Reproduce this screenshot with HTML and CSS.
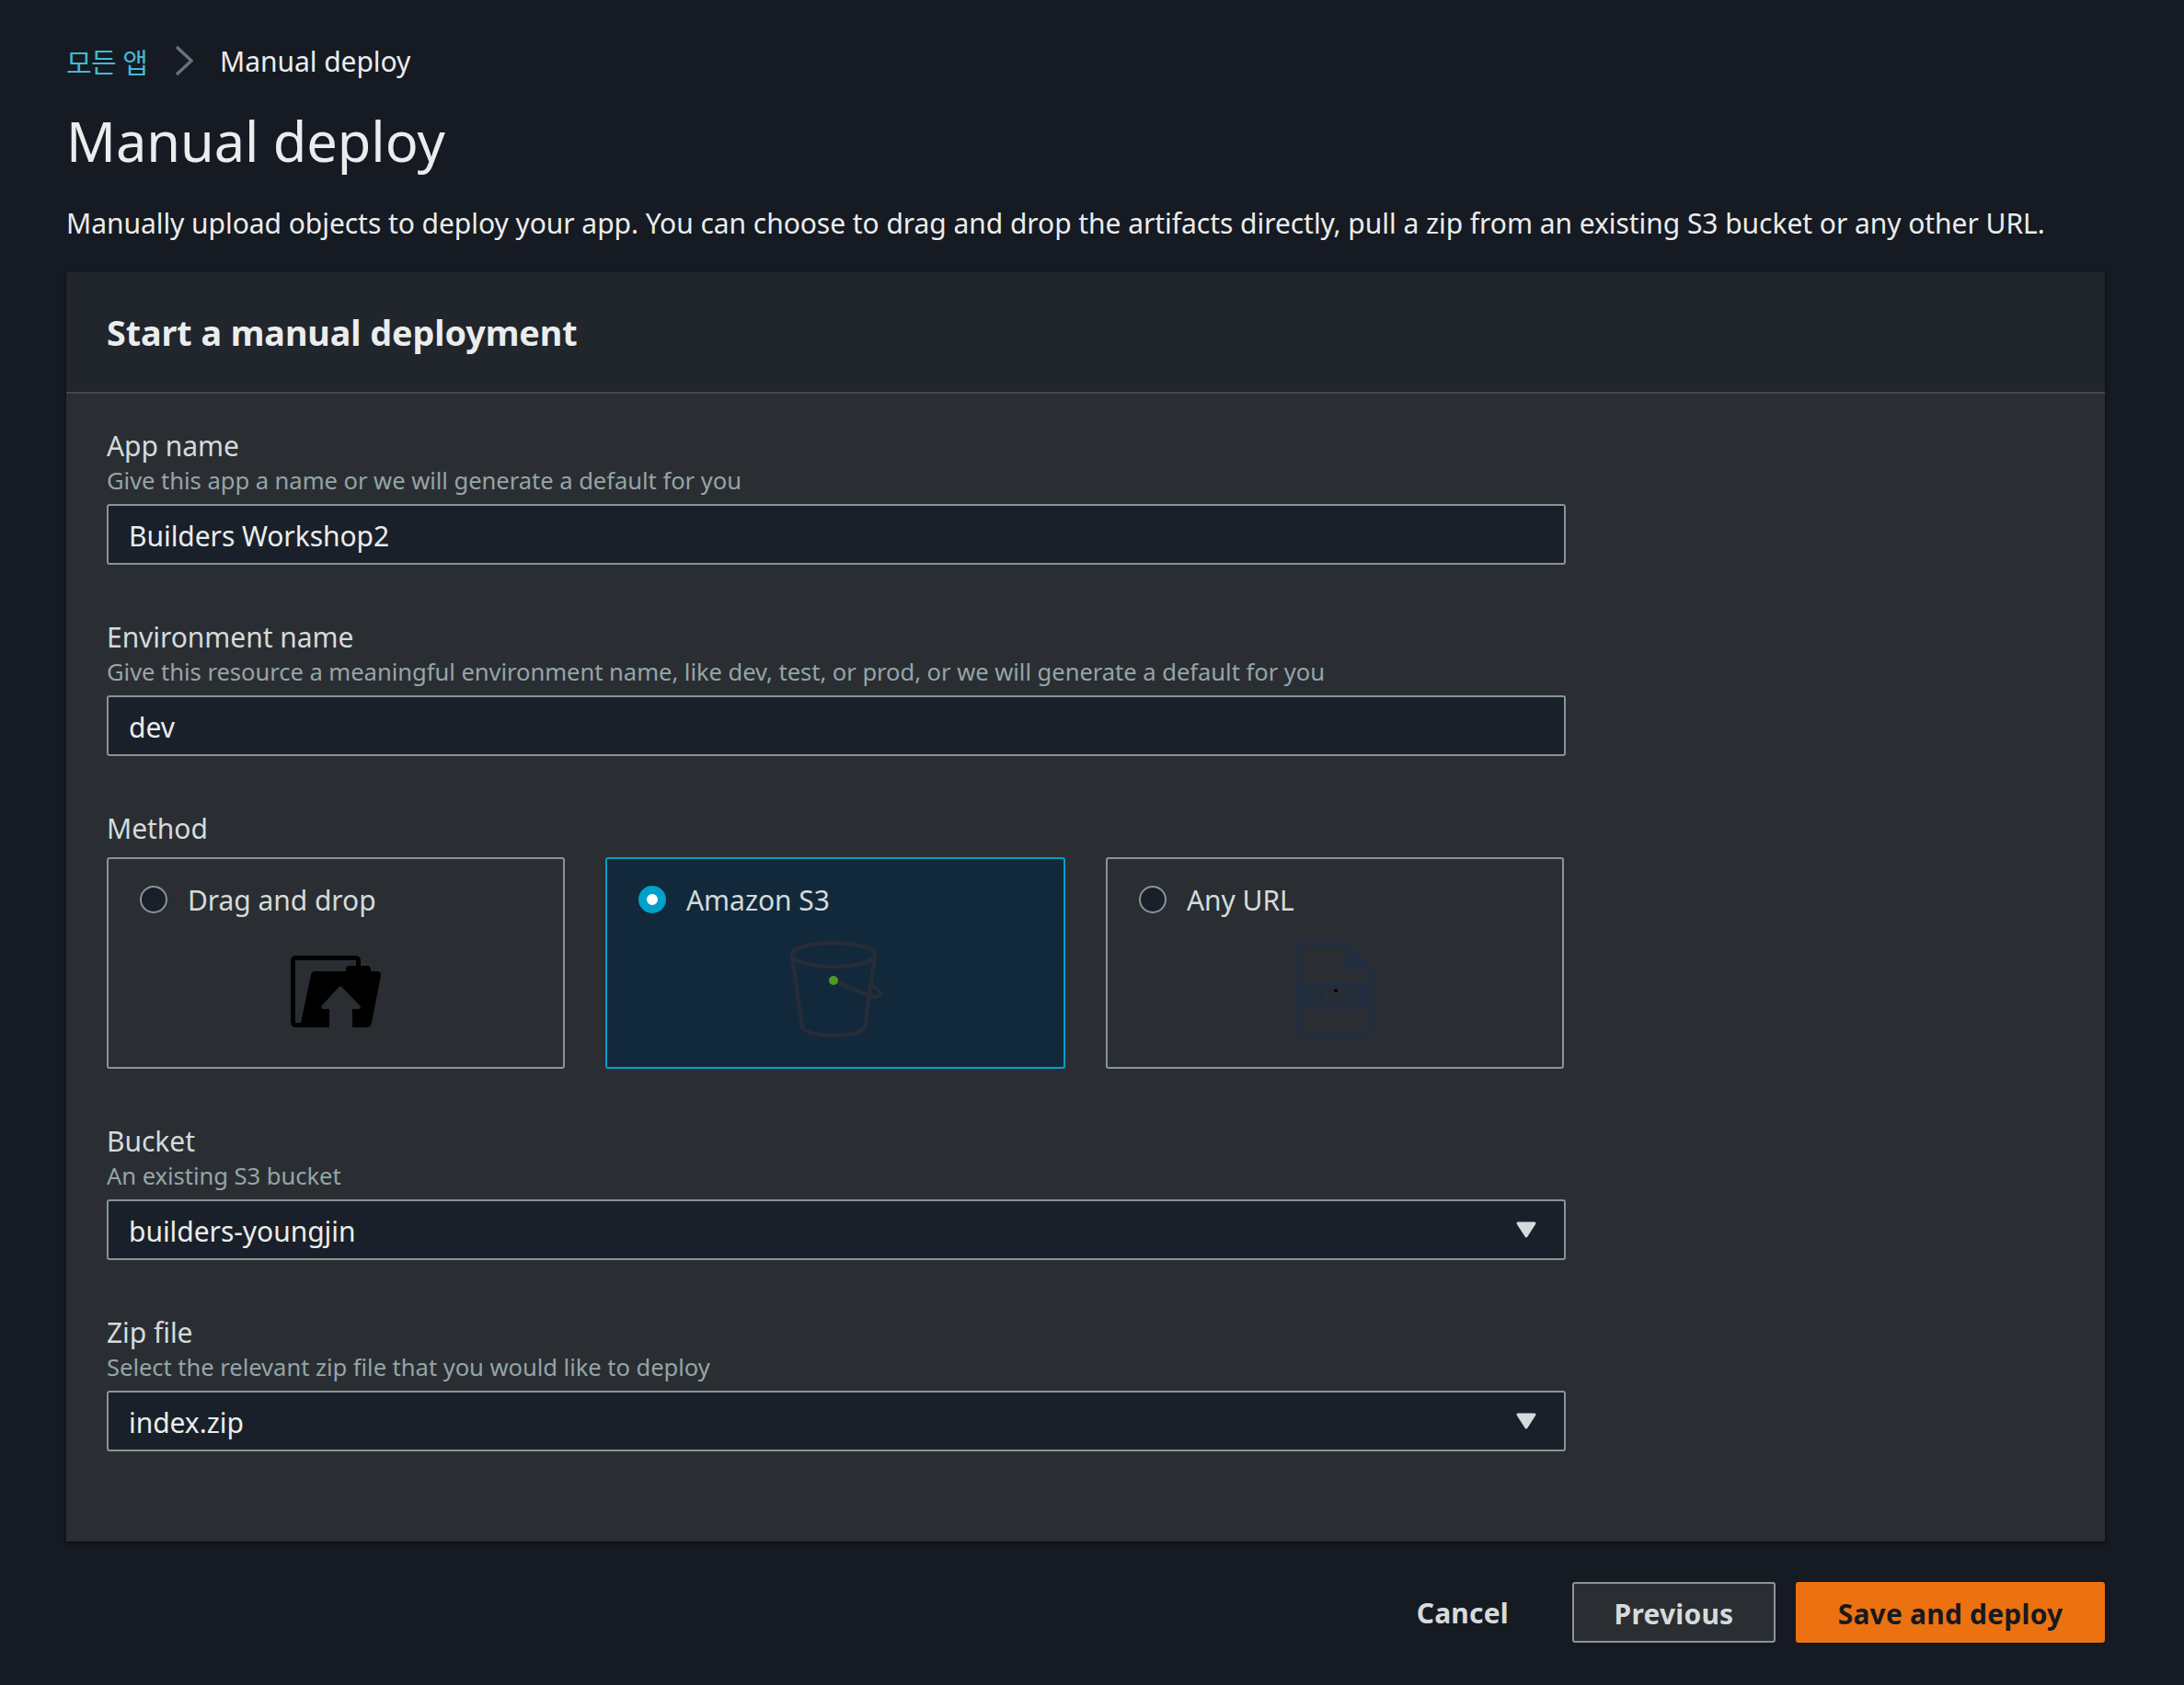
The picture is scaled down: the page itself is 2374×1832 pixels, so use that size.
FILE: index.html
```html
<!DOCTYPE html>
<html lang="en">
<head>
    <meta charset="UTF-8">
    <title>Manual deploy</title>
    <link rel="stylesheet" href="styles.css">
</head>
<body>
    <nav class="crumbs">
        <a class="crumb-link" href="#">모든 앱</a>
        <svg class="crumb-sep" width="20" height="34" viewBox="0 0 20 34"><path d="M2 2 L18 17 L2 32" fill="none" stroke="#687078" stroke-width="3.5"/></svg>
        <span class="crumb-now">Manual deploy</span>
    </nav>
    <h1 class="title">Manual deploy</h1>
    <p class="intro">Manually upload objects to deploy your app. You can choose to drag and drop the artifacts directly, pull a zip from an existing S3 bucket or any other URL.</p>

    <section class="panel">
        <h2 class="panel-head">Start a manual deployment</h2>
        <div class="panel-body">
            <div class="field">
                <div class="label">App name</div>
                <div class="hint">Give this app a name or we will generate a default for you</div>
                <div class="input">Builders Workshop2</div>
            </div>
            <div class="field">
                <div class="label">Environment name</div>
                <div class="hint">Give this resource a meaningful environment name, like dev, test, or prod, or we will generate a default for you</div>
                <div class="input">dev</div>
            </div>
            <div class="field">
                <div class="label label-method">Method</div>
                <div class="methods">
                    <div class="method">
                        <div class="method-top"><span class="radio"></span><span>Drag and drop</span></div>
                        <svg class="method-icon" width="120" height="110" viewBox="0 0 120 110">
                            <path d="M84.5 32 V24 a2.5 2.5 0 0 0 -2.5 -2.5 H16 a2.5 2.5 0 0 0 -2.5 2.5 V92 a2.5 2.5 0 0 0 2.5 2.5 H30" fill="none" stroke="#000" stroke-width="5"/>
                            <path d="M22 92 L33 40 a5 5 0 0 1 5 -4 H71 V34 a4 4 0 0 1 4 -4 H94 a4 4 0 0 1 4 4 V36 H105 a4 4 0 0 1 4 4.5 L99 92 a6 6 0 0 1 -5 5 H78 V77 H85 a2 2 0 0 0 1.5 -3.3 L66.5 53 a2 2 0 0 0 -3 0 L44.5 73.7 a2 2 0 0 0 1.5 3.3 H53 V97 H22 Z" fill="#000"/>
                        </svg>
                    </div>
                    <div class="method method-on">
                        <div class="method-top"><span class="radio radio-on"></span><span>Amazon S3</span></div>
                        <svg class="method-icon" width="120" height="110" viewBox="0 0 120 110">
                            <g fill="none" stroke="#272c38" stroke-width="4.5" stroke-linecap="round">
                                <ellipse cx="58" cy="18" rx="45" ry="13"/>
                                <path d="M13 20 L24 96 C26 109 90 109 92 96 L103 20"/>
                                <path d="M58 46 L95 62 C104 65 111 64 109 60 C107 56 102 53 99 51"/>
                            </g>
                            <circle cx="58" cy="46" r="5" fill="#4a9c1f"/>
                        </svg>
                    </div>
                    <div class="method">
                        <div class="method-top"><span class="radio"></span><span>Any URL</span></div>
                        <svg class="method-icon" width="120" height="110" viewBox="0 0 120 110">
                            <path d="M20 7 H72 L99 35 V104 H20 Z" fill="none" stroke="#222d3d" stroke-width="6" stroke-linejoin="round"/>
                            <path d="M72 6 L101 36 H72 Z" fill="#222d3d"/>
                            <rect x="18" y="47" width="84" height="31" fill="#222d3d"/>
                            <text class="url-text" x="60" y="72" text-anchor="middle">URL</text>
                            <circle cx="61" cy="57" r="2" fill="#000"/>
                        </svg>
                    </div>
                </div>
            </div>
            <div class="field">
                <div class="label">Bucket</div>
                <div class="hint">An existing S3 bucket</div>
                <div class="input select">builders-youngjin<svg class="caret" width="24" height="20" viewBox="0 0 24 20"><path d="M3 3 H21 L12 17 Z" fill="#d5dbdb" stroke="#d5dbdb" stroke-width="3" stroke-linejoin="round"/></svg></div>
            </div>
            <div class="field">
                <div class="label">Zip file</div>
                <div class="hint">Select the relevant zip file that you would like to deploy</div>
                <div class="input select">index.zip<svg class="caret" width="24" height="20" viewBox="0 0 24 20"><path d="M3 3 H21 L12 17 Z" fill="#d5dbdb" stroke="#d5dbdb" stroke-width="3" stroke-linejoin="round"/></svg></div>
            </div>
        </div>
    </section>

    <div class="actions">
        <a class="btn btn-plain" href="#">Cancel</a>
        <a class="btn btn-line" href="#">Previous</a>
        <a class="btn btn-main" href="#">Save and deploy</a>
    </div>
</body>
</html>
```

FILE: styles.css
```css
* {
    box-sizing: border-box;
}
body {
    margin: 0;
    padding: 46px 86px 46px 72px;
    background-color: #161a22;
    color: #eaeded;
    font-family: "Noto Sans", "Noto Sans CJK KR", sans-serif;
    font-size: 30px;
    letter-spacing: -0.05px;
}
.crumbs {
    display: flex;
    align-items: center;
    height: 40px;
}
.crumb-link {
    color: #44b9d6;
    text-decoration: none;
    width: 118px;
    letter-spacing: -0.6px;
}
.crumb-sep {
    width: 20px;
    margin-right: 29px;
}
.crumb-now {
    color: #eaeded;
}
.title {
    margin: 21px 0 0;
    height: 90px;
    line-height: 92px;
    font-size: 59.5px;
    font-weight: 400;
}
.intro {
    margin: 23px 0 0;
    height: 44px;
    line-height: 46px;
}
.panel {
    margin-top: 32px;
    background-color: #2a2e33;
    box-shadow: 0 2px 4px rgba(0, 0, 0, 0.5);
}
.panel-head {
    margin: 0;
    height: 132px;
    padding: 0 44px;
    line-height: 131px;
    background-color: #21252c;
    border-bottom: 2px solid #414750;
    font-size: 37.7px;
    font-weight: 700;
}
.panel-body {
    display: flex;
    flex-direction: column;
    gap: 60px;
    padding: 38px 44px 98px;
}
.label {
    height: 38px;
    line-height: 38px;
    color: #d5dbdb;
}
.label-method {
    margin-bottom: 12px;
}
.hint {
    height: 36px;
    margin-bottom: 8px;
    line-height: 38px;
    font-size: 25.6px;
    color: #95a5a6;
}
.input {
    position: relative;
    width: 1586px;
    height: 66px;
    padding: 0 22px;
    line-height: 66px;
    background-color: #1a2029;
    border: 2px solid #879596;
    border-radius: 3px;
}
.caret {
    position: absolute;
    top: 21px;
    right: 29px;
}
.methods {
    display: grid;
    grid-template-columns: 498px 500px 498px;
    gap: 44px;
}
.method {
    height: 230px;
    padding: 27px 34px 0;
    background-color: #2a2e33;
    border: 2px solid #879596;
    border-radius: 3px;
    color: #d5dbdb;
}
.method-on {
    background-color: #12293b;
    border-color: #00a1c9;
}
.method-top {
    display: flex;
    align-items: center;
    gap: 22px;
    height: 34px;
}
.method-icon {
    display: block;
    margin: 25px auto 0;
}
.radio {
    width: 30px;
    height: 30px;
    border: 2px solid #879596;
    border-radius: 50%;
    background-color: #1a2029;
}
.radio-on {
    border: 9px solid #00a1c9;
    background-color: #fff;
}
.url-text {
    font-family: "Noto Sans", sans-serif;
    font-size: 27px;
    font-weight: 700;
    fill: #2a2e33;
}
.actions {
    display: flex;
    justify-content: flex-end;
    align-items: center;
    margin-top: 44px;
}
.btn {
    height: 66px;
    line-height: 68px;
    border-radius: 3px;
    font-weight: 700;
    letter-spacing: 0.2px;
    text-decoration: none;
    text-align: center;
}
.btn-plain {
    color: #d5dbdb;
    margin-right: 69px;
}
.btn-line {
    width: 221px;
    margin-right: 22px;
    line-height: 66px;
    color: #d5dbdb;
    background-color: #2a2e33;
    border: 2px solid #879596;
}
.btn-main {
    width: 336px;
    line-height: 70px;
    color: #16191f;
    background-color: #ec7211;
}
```
